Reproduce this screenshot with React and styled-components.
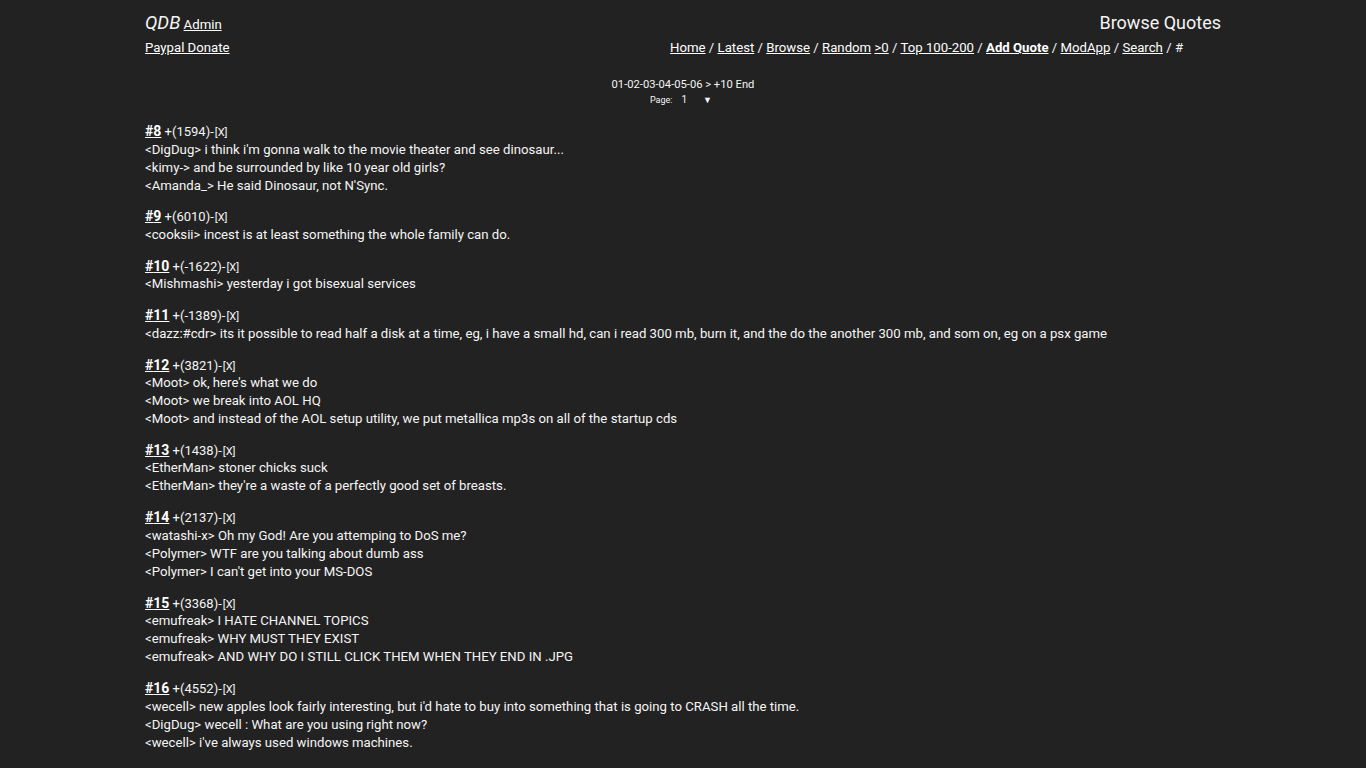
import React from 'react'
import styled, { createGlobalStyle } from 'styled-components'

const quotes = [
  {
    id: 8,
    score: '1594',
    lines: [
      "<DigDug> i think i'm gonna walk to the movie theater and see dinosaur...",
      '<kimy-> and be surrounded by like 10 year old girls?',
      "<Amanda_> He said Dinosaur, not N'Sync.",
    ],
  },
  {
    id: 9,
    score: '6010',
    lines: ['<cooksii> incest is at least something the whole family can do.'],
  },
  {
    id: 10,
    score: '-1622',
    lines: ['<Mishmashi> yesterday i got bisexual services'],
  },
  {
    id: 11,
    score: '-1389',
    lines: [
      '<dazz:#cdr> its it possible to read half a disk at a time, eg, i have a small hd, can i read 300 mb, burn it, and the do the another 300 mb, and som on, eg on a psx game',
    ],
  },
  {
    id: 12,
    score: '3821',
    lines: [
      "<Moot> ok, here's what we do",
      '<Moot> we break into AOL HQ',
      '<Moot> and instead of the AOL setup utility, we put metallica mp3s on all of the startup cds',
    ],
  },
  {
    id: 13,
    score: '1438',
    lines: [
      '<EtherMan> stoner chicks suck',
      "<EtherMan> they're a waste of a perfectly good set of breasts.",
    ],
  },
  {
    id: 14,
    score: '2137',
    lines: [
      '<watashi-x> Oh my God! Are you attemping to DoS me?',
      '<Polymer> WTF are you talking about dumb ass',
      "<Polymer> I can't get into your MS-DOS",
    ],
  },
  {
    id: 15,
    score: '3368',
    lines: [
      '<emufreak> I HATE CHANNEL TOPICS',
      '<emufreak> WHY MUST THEY EXIST',
      '<emufreak> AND WHY DO I STILL CLICK THEM WHEN THEY END IN .JPG',
    ],
  },
  {
    id: 16,
    score: '4552',
    lines: [
      "<wecell> new apples look fairly interesting, but i'd hate to buy into something that is going to CRASH all the time.",
      '<DigDug> wecell : What are you using right now?',
      "<wecell> i've always used windows machines.",
    ],
  },
]

const navLinks = [
  { label: 'Home' },
  { label: 'Latest' },
  { label: 'Browse' },
  { label: 'Random' },
  { label: '>0' },
  { label: 'Top 100-200' },
  { label: 'Add Quote', bold: true },
  { label: 'ModApp' },
  { label: 'Search' },
]

export default function App() {
  return (
    <>
      <GlobalStyle />
      <Page>
        <Header>
          <HeaderRow>
            <Brand>
              <Logo>QDB</Logo> <NavLink href="#">Admin</NavLink>
            </Brand>
            <PageTitle>Browse Quotes</PageTitle>
          </HeaderRow>
          <HeaderRow>
            <NavLink href="#">Paypal Donate</NavLink>
            <Nav>
              {navLinks.map((l) => (
                <React.Fragment key={l.label}>
                  <NavLink href="#" $bold={l.bold}>
                    {l.label}
                  </NavLink>
                  {l.label === 'Random' ? ' ' : ' / '}
                </React.Fragment>
              ))}
              #
            </Nav>
          </HeaderRow>
        </Header>

        <Pager>
          <PagerLinks>01-02-03-04-05-06 &gt; +10 End</PagerLinks>
          <PageSelect>
            Page:
            <SelectBox>
              <span>1</span>
              <Arrow>▼</Arrow>
            </SelectBox>
          </PageSelect>
        </Pager>

        <QuoteList>
          {quotes.map((q) => (
            <Quote key={q.id}>
              <QuoteHead>
                <QuoteId href="#">#{q.id}</QuoteId> +({q.score})-
                <Flag>[X]</Flag>
              </QuoteHead>
              {q.lines.map((line, i) => (
                <QuoteLine key={i}>{line}</QuoteLine>
              ))}
            </Quote>
          ))}
        </QuoteList>
      </Page>
    </>
  )
}

const GlobalStyle = createGlobalStyle`
  html, body {
    margin: 0;
    background: #222222;
    color: #f5f5f5;
    font-family: Roboto, "Liberation Sans", sans-serif;
  }
`

const Page = styled.div`
  width: 1076px;
  margin: 0 auto;
  padding-top: 12px;
`

// Header
//
const Header = styled.div`
  display: flex;
  flex-direction: column;
  gap: 4px;
`

const HeaderRow = styled.div`
  display: flex;
  justify-content: space-between;
  align-items: baseline;
  height: 24px;
`

const Brand = styled.div`
  font-size: 13.2px;
`

const Logo = styled.span`
  font-size: 18.5px;
  font-style: italic;
`

const PageTitle = styled.div`
  font-size: 18px;
`

const Nav = styled.div`
  font-size: 13.2px;
  padding-right: 38px;
`

const NavLink = styled.a`
  color: #ffffff;
  font-size: 13.2px;
  font-weight: ${({ $bold }) => ($bold ? 700 : 400)};
`

// Pager
//
const Pager = styled.div`
  display: flex;
  flex-direction: column;
  align-items: center;
  margin-top: 14px;
`

const PagerLinks = styled.div`
  font-size: 11.2px;
  line-height: 14px;
`

const PageSelect = styled.div`
  display: flex;
  align-items: center;
  font-size: 9px;
  line-height: 16px;
  margin-right: 4px;
`

const SelectBox = styled.span`
  display: inline-flex;
  align-items: center;
  gap: 16px;
  margin-left: 9px;
  font-size: 10px;
`

const Arrow = styled.span`
  font-size: 9px;
`

// Quotes
//
const QuoteList = styled.div`
  display: flex;
  flex-direction: column;
  gap: 12.9px;
  margin-top: 14px;
`

const Quote = styled.div`
  font-size: 13.2px;
  line-height: 18px;
`

const QuoteHead = styled.div`
  height: 18.5px;
  font-size: 13px;
`

const QuoteId = styled.a`
  color: #ffffff;
  font-weight: 700;
  font-size: 14px;
`

const Flag = styled.span`
  font-size: 11px;
  margin-left: 1px;
`

const QuoteLine = styled.div``
